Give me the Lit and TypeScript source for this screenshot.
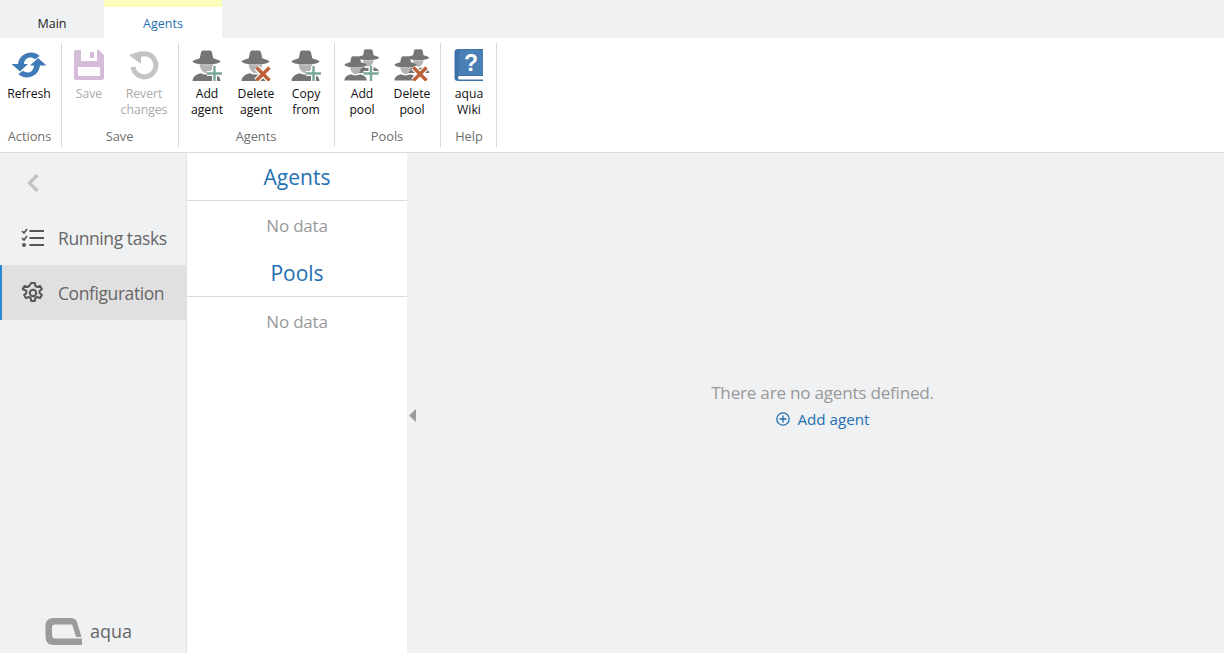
import { LitElement, html, css, svg } from "lit";
import { customElement } from "lit/decorators.js";

const agent = (x: number, y: number, s = 1) => svg`<g transform="translate(${x} ${y}) scale(${s})">
  <path d="M9 3.200C10.500 .8 12.600 1.800 14.500 1.800C16.400 1.800 18.500 .8 20 3.200L21.200 9.200C24 10 27.600 11 28.600 12.400C27 14.400 21 15.600 14.500 15.600C8 15.600 2 14.400 .4 12.400C1.400 11 5 10 7.800 9.200Z" fill="#757575"/>
  <path d="M7.800 15.400C11.500 16.400 17.500 16.400 21.200 15.400C21 20 18 24 14.500 24C11 24 8 20 7.800 15.400Z" fill="#b4b4b4"/>
  <path d="M.5 32C1 28 3 25.600 9 24.200C11 26 18 26 20 24.200C26 25.600 28 28 28.500 32Z" fill="#757575"/>
</g>`;
const plus = (x: number, y: number) => svg`<path d="M${x} ${y - 7.5}V${y + 7.5}M${x - 7.5} ${y}H${x + 7.5}" stroke="#fff" stroke-width="5" fill="none"/><path d="M${x} ${y - 7.5}V${y + 7.5}M${x - 7.5} ${y}H${x + 7.5}" stroke="#7ba69b" stroke-width="2.400" fill="none"/>`;
const cross = (x: number, y: number) => svg`<path d="M${x - 6.5} ${y - 6.5}L${x + 6.5} ${y + 6.5}M${x + 6.5} ${y - 6.5}L${x - 6.5} ${y + 6.5}" stroke="#fff" stroke-width="6" fill="none"/><path d="M${x - 6.5} ${y - 6.5}L${x + 6.5} ${y + 6.5}M${x + 6.5} ${y - 6.5}L${x - 6.5} ${y + 6.5}" stroke="#bd6238" stroke-width="3.400" fill="none"/>`;

const icons: Record<string, unknown> = {
  refresh: svg`<svg width="36" height="28" viewBox="0 0 36 28"><g fill="#3f7bb6">
    <path d="M7 13C8 5 15 1 21 1.500C24.500 1.800 27 3.300 28.600 5L24 8.200C22.500 7 20.500 6.400 18.500 6.600C15.500 6.900 13.200 9.600 13 13H17L9 20.500L.5 13Z"/>
    <path d="M29 14.500C28.300 22 21.500 27 15 26.400C11.500 26 9 24.600 7.400 23L12 19.800C13.500 21 15.500 21.600 17.500 21.400C20.500 21.100 22.800 18.500 23 14.500H19L27 7L35.500 14.500Z"/></g></svg>`,
  save: svg`<svg width="30" height="30" viewBox="0 0 30 30"><path fill-rule="evenodd" fill="#d5bdd9" d="M2 0H25L30 5V28A2 2 0 0 1 28 30H2A2 2 0 0 1 0 28V2A2 2 0 0 1 2 0ZM7 0V11H23V0ZM4 17V26H26V17Z"/><rect x="16" y="2" width="4" height="6" fill="#d5bdd9"/></svg>`,
  revert: svg`<svg width="30" height="30" viewBox="0 0 30 30"><path d="M8 6.500A11.500 11.500 0 1 1 4 17" fill="none" stroke="#c4c4c4" stroke-width="5"/><path d="M0 5L12 1V14Z" fill="#c4c4c4"/></svg>`,
  addAgent: svg`<svg width="32" height="32" viewBox="0 0 32 32">${agent(1, 0)}${plus(23.5, 24.5)}</svg>`,
  delAgent: svg`<svg width="32" height="32" viewBox="0 0 32 32">${agent(1, 0)}${cross(23, 25)}</svg>`,
  addPool: svg`<svg width="36" height="32" viewBox="0 0 36 32">${agent(13, -1, .78)}${agent(0, 6, .8)}${plus(27, 24.5)}</svg>`,
  delPool: svg`<svg width="36" height="32" viewBox="0 0 36 32">${agent(13, -1, .78)}${agent(0, 6, .8)}${cross(26, 25)}</svg>`,
  wiki: svg`<svg width="30" height="32" viewBox="0 0 30 32"><path d="M4 0H29V27H5A2 2 0 0 0 5 30.500H29V32H4A3.500 3.500 0 0 1 .5 28.500V3.500A3.500 3.500 0 0 1 4 0Z" fill="#3f72a8"/><rect x="5" y="1" width="24" height="25" fill="#4a7fb5"/><text x="17" y="22" text-anchor="middle" font-family="Liberation Sans" font-weight="700" font-size="23" fill="#fff">?</text></svg>`,
};

const groups = [
  { label: "Actions", cls: "", gw: 61, items: [{ t: ["Refresh"], i: "refresh", w: 58 }] },
  { label: "Save", cls: "g2", gw: 116, items: [{ t: ["Save"], i: "save", w: 44, off: true }, { t: ["Revert", "changes"], i: "revert", w: 66, off: true }] },
  { label: "Agents", cls: "g2", gw: 155, items: [{ t: ["Add", "agent"], i: "addAgent", w: 46 }, { t: ["Delete", "agent"], i: "delAgent", w: 52 }, { t: ["Copy", "from"], i: "addAgent", w: 48 }] },
  { label: "Pools", cls: "g2", gw: 105, items: [{ t: ["Add", "pool"], i: "addPool", w: 44 }, { t: ["Delete", "pool"], i: "delPool", w: 56 }] },
  { label: "Help", cls: "g3", gw: 55, items: [{ t: ["aqua", "Wiki"], i: "wiki", w: 54 }] },
];

@customElement("app-root")
export class AppRoot extends LitElement {
  static styles = css`
    :host { display: flex; flex-direction: column; width: 1224px; height: 653px; overflow: hidden; background: #f0f1f3; font-family: "Open Sans", "Noto Sans", sans-serif; color: #000; }
    .tabs { display: flex; height: 38px; flex: none; }
    .tab { font-size: 12.500px; display: flex; align-items: center; justify-content: center; padding-top: 9px; box-sizing: border-box; }
    .tab-main { width: 104px; color: #222; }
    .tab-agents { width: 118px; background: #fff; border-top: 7px solid #fdfdbb; color: #1f6fb2; padding-top: 2px; }
    .ribbon { display: flex; height: 115px; flex: none; background: #fff; border-bottom: 1px solid #dcdcdc; box-sizing: border-box; padding-top: 5px; }
    .group { display: flex; flex-direction: column; height: 104px; border-right: 1px solid #dadada; box-sizing: content-box; flex: none; }
    .g2 { padding-left: 5px; }
    .g3 { padding-left: 1px; }
    .btns { display: flex; flex: 1; }
    .btn { display: flex; flex-direction: column; align-items: center; font-size: 12.200px; line-height: 16px; color: #111; white-space: nowrap; }
    .btn.off { color: #aaa; }
    .ico { height: 36px; margin-top: 4px; margin-bottom: 3px; display: flex; align-items: center; justify-content: center; }
    .glabel { text-align: center; font-size: 12.800px; color: #6f6f6f; height: 21px; line-height: 20px; width: 59px; }
    .g2 .glabel { width: 100%; margin-left: -3px; }
    .g3 .glabel { width: 54px; }
    .body { flex: 1; display: flex; min-height: 0; }
    .side { width: 187px; flex: none; border-right: 1px solid #e2e2e2; display: flex; flex-direction: column; box-sizing: border-box; }
    .back { height: 57px; padding: 2px 0 0 26px; display: flex; align-items: center; box-sizing: border-box; }
    .nav { height: 55px; display: flex; align-items: center; gap: 13px; padding-left: 21px; font-size: 17.500px; color: #666; letter-spacing: -.42px; box-sizing: border-box; }
    .nav.on { background: #e0e0e0; border-left: 2px solid #2a87d0; padding-left: 19px; }
    .logo { margin-top: auto; height: 35px; display: flex; align-items: flex-start; gap: 8px; padding-left: 45px; font-size: 18px; color: #666; line-height: 26px; box-sizing: border-box; }
    .panel { width: 220px; flex: none; background: #fff; }
    .head { border-bottom: 1px solid #dcdcdc; display: flex; align-items: center; justify-content: center; font-size: 21px; color: #1f6fb2; box-sizing: border-box; height: 48px; }
    .empty { height: 48px; display: flex; align-items: center; justify-content: center; font-size: 17px; color: #999; letter-spacing: -.2px; }
    .split { width: 14px; flex: none; display: flex; align-items: center; justify-content: center; padding: 24px 4px 0 0; box-sizing: border-box; }
    .content { flex: 1; display: flex; flex-direction: column; align-items: center; justify-content: center; padding-top: 7px; }
    .msg { font-size: 17.200px; color: #999; letter-spacing: -.27px; line-height: 26px; }
    .add { font-size: 15.200px; color: #1f6fb2; display: flex; align-items: center; gap: 7px; line-height: 28px; margin-top: -1px; padding-left: 1px; }
  `;

  render() {
    return html`
      <div class="tabs"><div class="tab tab-main">Main</div><div class="tab tab-agents">Agents</div></div>
      <div class="ribbon">
        ${groups.map((g) => html`<div class="group ${g.cls}" style="width:${g.gw - (g.cls === "g2" ? 5 : g.cls === "g3" ? 1 : 0)}px">
          <div class="btns">${g.items.map((b) => html`<div class="btn ${(b as any).off ? "off" : ""}" style="width:${b.w}px">
            <div class="ico">${icons[b.i]}</div>${b.t.map((l) => html`<span>${l}</span>`)}
          </div>`)}</div>
          <div class="glabel">${g.label}</div>
        </div>`)}
      </div>
      <div class="body">
        <div class="side">
          <div class="back"><svg width="14" height="20" viewBox="0 0 14 20"><path d="M11.500 2L3.500 10L11.500 18" fill="none" stroke="#c2c2c2" stroke-width="3.200"/></svg></div>
          <div class="nav"><svg width="24" height="20" viewBox="0 0 24 20"><g fill="none" stroke="#555" stroke-width="2"><path d="M8.500 3H23M8.500 10H23M8.500 17H23"/><path stroke-width="1.600" d="M1 3L3 5L6 1M1 10L3 12L6 8"/></g><circle cx="3" cy="17" r="2" fill="#555"/></svg><span>Running tasks</span></div>
          <div class="nav on"><svg width="24" height="24" viewBox="0 0 24 24"><g fill="none" stroke="#555" stroke-width="2" stroke-linejoin="round"><circle cx="12" cy="12" r="3.200"/><path d="M10.200 2h3.600l.6 3 1.900 1 2.800-1.100 1.800 3.100-2.300 1.900v2.200l2.300 1.900-1.800 3.100-2.800-1.100-1.900 1-.6 3h-3.600l-.6-3-1.900-1-2.800 1.100-1.800-3.100 2.300-1.900V9.900L1.700 8l1.800-3.100 2.800 1.100 1.900-1z"/></g></svg><span>Configuration</span></div>
          <div class="logo"><svg width="37" height="27" viewBox="0 0 37 27"><path fill-rule="evenodd" fill="#9b9b9b" d="M9 0H25C30 0 32 2 32.500 6L36.500 19H31L28 9C27.500 7 27 6.500 25 6.500H10C8 6.500 7 7.500 7 9.500V16C7 19 8 20.500 10 20.500H37V27H9C3 27 .5 24 .5 18V8C.5 3 3 0 9 0Z"/></svg><span>aqua</span></div>
        </div>
        <div class="panel">
          <div class="head">Agents</div><div class="empty">No data</div>
          <div class="head">Pools</div><div class="empty">No data</div>
        </div>
        <div class="split"><svg width="7" height="13" viewBox="0 0 7 13"><path d="M7 0V13L0 6.500Z" fill="#9a9a9a"/></svg></div>
        <div class="content">
          <div class="msg">There are no agents defined.</div>
          <div class="add"><svg width="14" height="14" viewBox="0 0 14 14"><circle cx="7" cy="7" r="6.200" fill="none" stroke="#1f6fb2" stroke-width="1.300"/><path d="M7 3.500V10.500M3.500 7H10.500" stroke="#1f6fb2" stroke-width="1.300"/></svg><span>Add agent</span></div>
        </div>
      </div>
    `;
  }
}
